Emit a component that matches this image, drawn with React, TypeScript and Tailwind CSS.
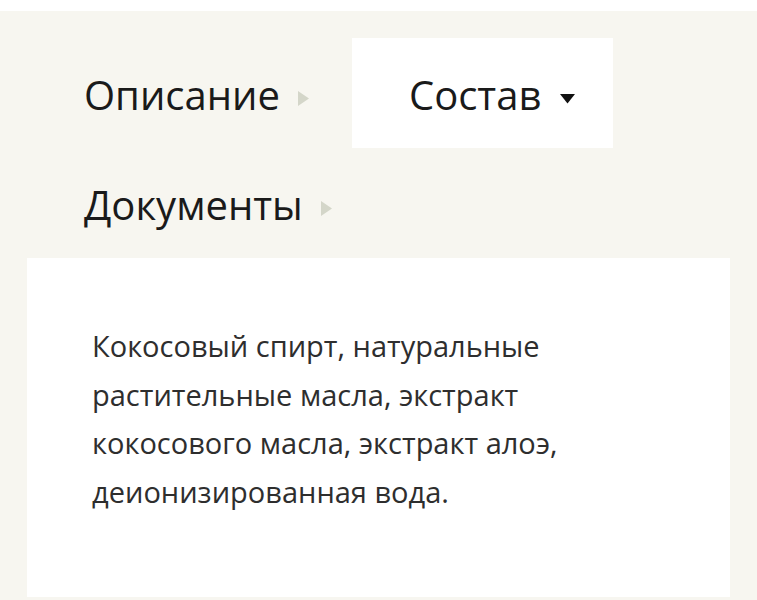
import React from "react";

function RightArrow() {
  return (
    <span className="flex w-[17px] shrink-0 items-center mt-[7px]">
      <svg width="11" height="15" viewBox="0 0 11 15">
        <polygon points="0,0 11,7.5 0,15" fill="#d4d6c9" />
      </svg>
    </span>
  );
}

function DownCaret() {
  return (
    <span className="flex w-[17px] shrink-0 items-center mt-[6px]">
      <svg width="17" height="11" viewBox="0 0 17 11">
        <polygon points="1,1 16,1 8.5,10.5" fill="#111111" />
      </svg>
    </span>
  );
}

function Tab({ label, active }: { label: string; active?: boolean }) {
  return (
    <div
      className={
        "flex h-[110px] items-start pl-[57px] pr-[37px] pt-[37px] " +
        (active ? "bg-white" : "")
      }
    >
      <div className="flex items-center gap-[18px] h-[40px]">
        <span className="text-[40px] leading-[40px] text-[#1a1a1a] whitespace-nowrap">
          {label}
        </span>
        {active ? <DownCaret /> : <RightArrow />}
      </div>
    </div>
  );
}

export default function App() {
  return (
    <div
      className="min-h-[600px] bg-white pt-[11px]"
      style={{ fontFamily: '"Open Sans", "Noto Sans", sans-serif' }}
    >
      <div className="min-h-[589px] bg-[#f7f6f0] px-[27px] pt-[27px]">
        <div className="flex flex-wrap">
          <Tab label="Описание" />
          <Tab label="Состав" active />
          <Tab label="Документы" />
        </div>
        <div className="bg-white pl-[65px] pr-[65px] pt-[64px] pb-[81px]">
          <p className="text-[29px] leading-[48.5px] text-[#2e2e2e]">
            Кокосовый спирт, натуральные растительные масла, экстракт кокосового масла, экстракт алоэ, деионизированная вода.
          </p>
        </div>
      </div>
    </div>
  );
}
